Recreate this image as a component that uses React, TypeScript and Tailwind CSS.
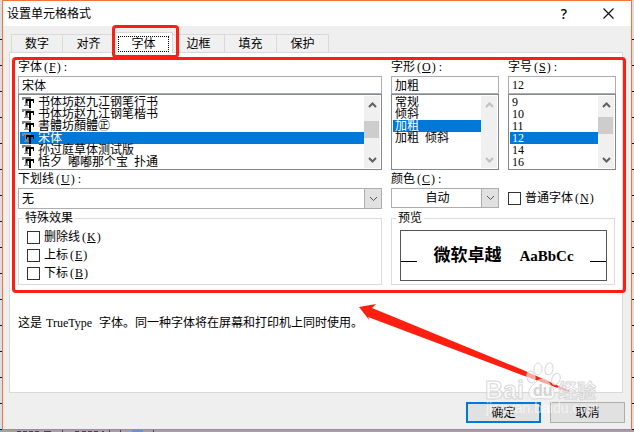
import { useState, type ReactNode } from 'react';
import clsx from 'clsx';

const tabs = ['数字', '对齐', '字体', '边框', '填充', '保护'];
const fonts = ['书体坊赵九江钢笔行书', '书体坊赵九江钢笔楷书', '書體坊顏體㊣', '宋体', '孙过庭草体测试版', '恬夕\u00a0\u00a0嘟嘟那个宝\u00a0\u00a0扑通'];
const styles = ['常规', '倾斜', '加粗', '加粗\u00a0\u00a0倾斜'];
const sizes = ['9', '10', '11', '12', '14', '16'];

function Key({ letter, colon }: { letter: string; colon?: boolean }) {
    return (
        <span className="ml-0.5">
            (<u className="mx-px">{letter}</u>){colon && ' :'}
        </span>
    );
}

function Chevron({ up, className }: { up?: boolean; className?: string }) {
    return (
        <svg viewBox="0 0 9 6" className={clsx('w-[9px] h-[6px]', className)} fill="none" stroke="currentColor">
            <path d={up ? 'M1 5 4.5 1.5 8 5' : 'M1 1 4.5 4.5 8 1'} />
        </svg>
    );
}

function TrueTypeIcon() {
    return (
        <svg viewBox="0 0 12 12" className="w-3 h-3 shrink-0" shapeRendering="crispEdges">
            <path fill="#868686" d="M0 1h9v3H7V3H6v6h1v1H2V9h1V3H2v1H0z" />
            <path fill="#000" d="M4 3h8v4h-1V5H9v7H7V5H5v2H4z" />
        </svg>
    );
}

type ScrollProps = { disabled?: boolean; thumb?: string };

function ScrollBar({ disabled, thumb }: ScrollProps) {
    const color = disabled ? 'text-[#bfbfbf]' : 'text-[#606060]';
    return (
        <div className="flex flex-col w-4 shrink-0 bg-[#f0f0f0]">
            <button type="button" aria-label="向上" disabled={disabled} className={clsx('flex h-[17px] items-center justify-center', color)}>
                <Chevron up className="stroke-2" />
            </button>
            {thumb && <div className={clsx('h-[17px] w-[15px] bg-[#cdcdcd]', thumb)} />}
            <button type="button" aria-label="向下" disabled={disabled} className={clsx('mt-auto flex h-[17px] items-center justify-center', color)}>
                <Chevron className="stroke-2" />
            </button>
        </div>
    );
}

type PickerProps = ScrollProps & {
    id: string;
    label: ReactNode;
    items: string[];
    value: string;
    onChange: (value: string) => void;
    icons?: boolean;
};

function Picker({ id, label, items, value, onChange, icons, ...scroll }: PickerProps) {
    return (
        <div className="min-w-0">
            <label htmlFor={id} className="block h-[17px] leading-[17px]">{label}</label>
            <input
                id={id}
                value={value}
                onChange={(e) => onChange(e.target.value)}
                className="block w-full h-[18px] border border-[#abadb3] bg-white px-[3px] outline-none"
            />
            <div className="flex border border-[#828790] bg-white p-px">
                <ul role="listbox" aria-labelledby={id} className="flex-1 min-w-0 h-[72px] overflow-hidden">
                    {items.map((item) => (
                        <li
                            key={item}
                            role="option"
                            aria-selected={item === value}
                            onClick={() => onChange(item)}
                            className={clsx(
                                'flex h-3 items-center gap-1 whitespace-nowrap pl-0.5 leading-3 cursor-default',
                                item === value && 'bg-[#0078d7] text-white',
                            )}
                        >
                            {icons && <TrueTypeIcon />}
                            {item}
                        </li>
                    ))}
                </ul>
                <ScrollBar {...scroll} />
            </div>
        </div>
    );
}

function DropDown({ id, label, options, className }: { id: string; label: ReactNode; options: string[]; className: string }) {
    return (
        <div>
            <label htmlFor={id} className="block h-[18px] leading-[18px]">{label}</label>
            <div className="relative">
                <select id={id} className={clsx('block w-full appearance-none border border-[#abadb3] bg-white pl-[3px] pr-[18px] outline-none', className)}>
                    {options.map((option) => (
                        <option key={option}>{option}</option>
                    ))}
                </select>
                <span className="pointer-events-none absolute inset-y-0 right-0 flex w-[18px] items-center justify-center border border-[#adadad] bg-[#e1e1e1] text-[#555]">
                    <Chevron />
                </span>
            </div>
        </div>
    );
}

function CheckBox({ children }: { children: ReactNode }) {
    return (
        <label className="flex h-[18px] items-center gap-1 whitespace-nowrap">
            <input type="checkbox" className="size-[13px] shrink-0 appearance-none border border-[#333] bg-white checked:bg-[#0078d7]" />
            <span>{children}</span>
        </label>
    );
}

function Arrow() {
    return (
        <svg viewBox="0 0 211 88" className="absolute bottom-[37px] right-[61px] w-[211px] h-[88px] pointer-events-none">
            <path fill="#ff1f10" d="M0 3 17 0 13 4 164 66 211 87 210 88 160 70 9 13 11 17z" />
        </svg>
    );
}

function Watermark() {
    return (
        <svg
            viewBox="0 0 130 56"
            className="absolute bottom-[13px] right-[17px] w-[130px] h-[56px] overflow-visible pointer-events-none"
            fontFamily="'Liberation Sans','Noto Sans CJK SC',sans-serif"
        >
            <g fill="#fff" fillOpacity="0.6" stroke="#d3d3d3" strokeOpacity="0.9">
                <ellipse cx="47" cy="17" rx="4" ry="6" transform="rotate(-15 47 17)" />
                <ellipse cx="54" cy="9" rx="4" ry="6" />
                <ellipse cx="65" cy="9" rx="4" ry="6" transform="rotate(10 65 9)" />
                <ellipse cx="72" cy="19" rx="4" ry="6" transform="rotate(20 72 19)" />
                <path d="M59 19c5 0 6 5 9 8s4 12-2 12-10-1-15 0-9-7-4-12 7-8 12-8z" />
                <text x="1" y="39" fontSize="25" fontWeight="700">Bai</text>
                <text x="74" y="38" fontSize="19" fontWeight="700">经验</text>
            </g>
            <text x="49" y="36" fontSize="16" fontWeight="700" fill="#d3d3d3">du</text>
            <text x="2" y="53" fontSize="14" fill="#fff" fillOpacity="0.6">jingyan.baidu.com</text>
        </svg>
    );
}

export default function App() {
    const [tab, setTab] = useState('字体');
    const [font, setFont] = useState('宋体');
    const [style, setStyle] = useState('加粗');
    const [size, setSize] = useState('12');

    return (
        <div className="flex min-h-screen flex-col bg-[#a3a1a5] font-['Liberation_Serif','Noto_Sans_CJK_SC',serif] text-xs text-black">
            <div className="flex flex-1 flex-col bg-[repeating-linear-gradient(to_bottom,#dedede_0px,#dedede_25px,#111_25px,#111_26px)] bg-[position:0_14px] px-[2px]">
                <main className="relative flex flex-1 flex-col border border-[#f87237] bg-[#efefef]">
                    <header className="flex h-[25px] items-center bg-white pl-1 pr-[17px]">
                        <h1 className="flex-1">设置单元格格式</h1>
                        <button type="button" aria-label="帮助" className="mr-9 font-['Noto_Sans',sans-serif] text-sm font-medium leading-4">?</button>
                        <button type="button" aria-label="关闭">
                            <svg viewBox="0 0 11 11" className="size-[11px]" stroke="#111" strokeWidth="1.2">
                                <path d="M.5.5l10 10M10.5.5l-10 10" />
                            </svg>
                        </button>
                    </header>

                    <div role="tablist" className="relative z-10 mt-1.5 -mb-px flex items-end pl-2">
                        {tabs.map((name) => (
                            <button
                                key={name}
                                type="button"
                                role="tab"
                                aria-selected={tab === name}
                                onClick={() => setTab(name)}
                                className={clsx(
                                    'relative border-r border-t border-[#d9d9d9] first:border-l',
                                    tab === name ? 'z-10 h-[21px] w-[58px] bg-white px-[3px] pt-[3px] pb-px' : 'h-[19px] w-[52px] border-b bg-[#f0f0f0]',
                                )}
                            >
                                {tab === name ? <span className="block border border-dotted border-black leading-[14px]">{name}</span> : name}
                                {name === '字体' && (
                                    <span className="absolute -left-[3px] -right-[7px] -top-2 -bottom-[5px] rounded-sm border-[3px] border-[#ff1f10] pointer-events-none" />
                                )}
                            </button>
                        ))}
                    </div>

                    <section role="tabpanel" className="ml-1.5 mr-2 flex-1 border border-[#d9d9d9] bg-white pb-[60px] pl-2 pr-1.5 pt-1.5">
                        <div className="relative">
                            <div className="grid grid-cols-[1fr_108px_108px] gap-x-[9px]">
                                <Picker id="font" label={<>字体<Key letter="F" colon /></>} items={fonts} value={font} onChange={setFont} icons thumb="mt-2" />
                                <Picker id="style" label={<>字形<Key letter="O" colon /></>} items={styles} value={style} onChange={setStyle} disabled />
                                <Picker id="size" label={<>字号<Key letter="S" colon /></>} items={sizes} value={size} onChange={setSize} thumb="mt-1" />

                                <DropDown id="underline" label={<>下划线<Key letter="U" colon /></>} options={['无', '单下划线', '双下划线']} className="h-[21px]" />
                                <DropDown id="color" label={<>颜色<Key letter="C" colon /></>} options={['自动']} className="h-5 text-center" />
                                <div className="pt-[19px]">
                                    <CheckBox>普通字体<Key letter="N" /></CheckBox>
                                </div>

                                <fieldset className="min-w-0 border border-[#dcdcdc] px-2 pb-0.5 pt-px">
                                    <legend className="-ml-1 px-0.5 leading-[18px]">特殊效果</legend>
                                    <CheckBox>删除线<Key letter="K" /></CheckBox>
                                    <CheckBox>上标<Key letter="E" /></CheckBox>
                                    <CheckBox>下标<Key letter="B" /></CheckBox>
                                </fieldset>
                                <fieldset className="col-span-2 mr-px min-w-0 border border-[#dcdcdc] pl-2 pr-[7px] pb-[3px] pt-[3px]">
                                    <legend className="-ml-1 px-0.5 leading-[18px]">预览</legend>
                                    <div className="flex h-[51px] items-center justify-between border border-[#555]">
                                        <span className="mt-3 h-px w-4 bg-black" />
                                        <p className="flex items-baseline gap-[18px] whitespace-nowrap text-[17px] font-bold leading-6">
                                            微软卓越
                                            <span className="text-[15px]">AaBbCc</span>
                                        </p>
                                        <span className="mt-3 h-px w-4 bg-black" />
                                    </div>
                                </fieldset>
                            </div>
                            <span className="absolute -bottom-2 -left-1.5 -right-[10px] -top-0.5 rounded-sm border-[3px] border-[#ff1f10] pointer-events-none" />
                        </div>

                        <p className="mt-[29px] leading-[18px]">
                            这是<span className="mx-1">TrueType</span> 字体。同一种字体将在屏幕和打印机上同时使用。
                        </p>
                    </section>

                    <footer className="mb-1.5 mr-1.5 mt-[9px] flex justify-end gap-[9px]">
                        <button type="button" className="h-[21px] w-[75px] border-2 border-[#0078d7] bg-[#e1e1e1]">确定</button>
                        <button type="button" className="h-[21px] w-[75px] border border-[#adadad] bg-[#e1e1e1]">取消</button>
                    </footer>

                    <Arrow />
                    <Watermark />
                </main>
            </div>
            <svg viewBox="0 0 160 2" className="h-0.5 w-40 shrink-0" shapeRendering="crispEdges">
                <path stroke="#45434a" d="M17 1h4M23 1h4M29 1h4M35 1h4M44 1h7M62 0v2M75 1h4M82 1h4M88 1h4M94 1h4M102 1h2M109 0v2M120 0v2M153 0v2" />
                <path fill="#6f93c5" d="M132 0h11v2h-11z" />
            </svg>
        </div>
    );
}
